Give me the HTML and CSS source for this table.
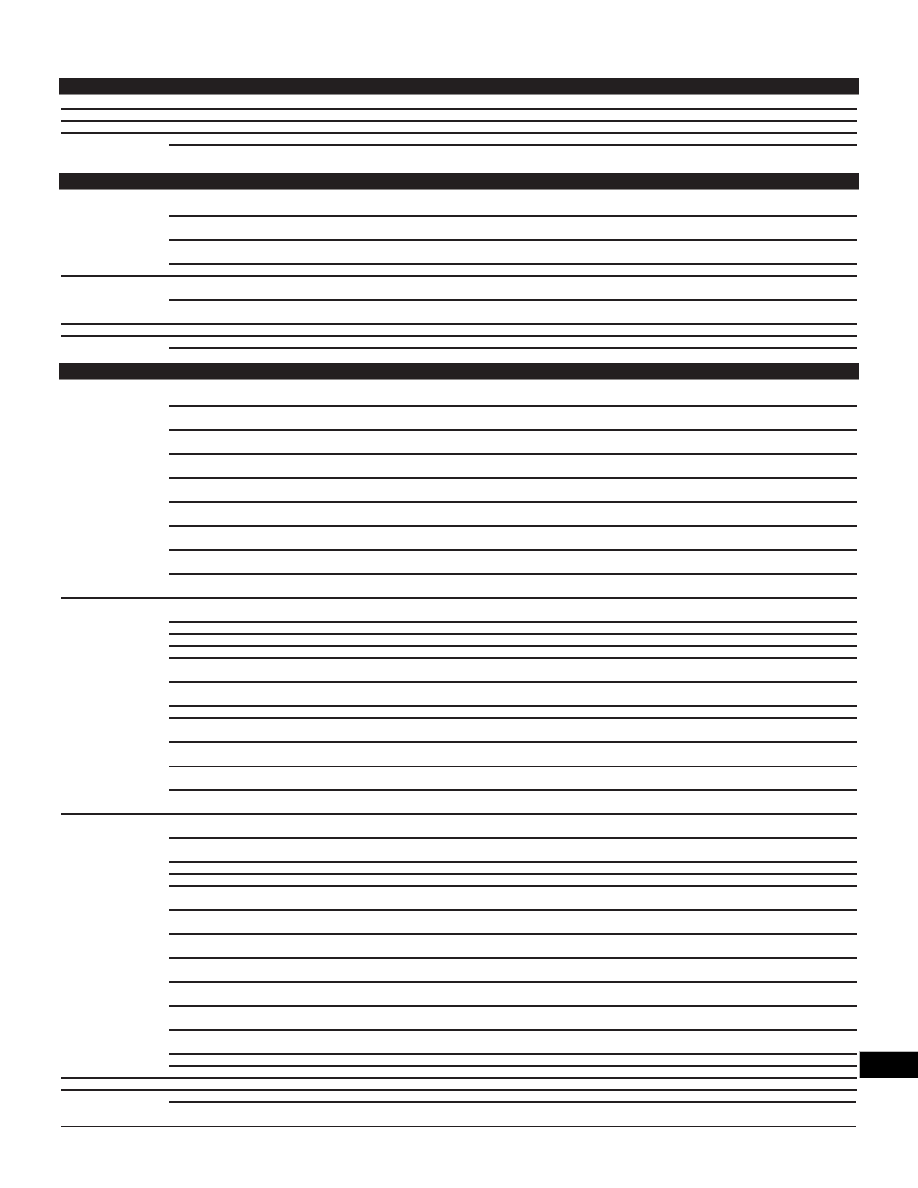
FILE: index.html
```html
<!DOCTYPE html>
<html>
<head>
<meta charset="utf-8">
<link rel="stylesheet" href="styles.css">
</head>
<body>
<div class="page">
  <section class="section first">
    <div class="bar"></div>
    <div class="rows">
      <div class="row h1"></div>
      <div class="row h1"></div>
      <div class="row h1"></div>
      <div class="group hidden">
        <div class="label"></div>
        <div class="subs">
          <div class="sub h1"></div>
          <div class="sub h2"></div>
        </div>
      </div>
    </div>
  </section>

  <section class="section">
    <div class="bar"></div>
    <div class="rows">
      <div class="group">
        <div class="label"></div>
        <div class="subs">
          <div class="sub h2"></div>
          <div class="sub h2"></div>
          <div class="sub h2"></div>
          <div class="sub h1"></div>
        </div>
      </div>
      <div class="group">
        <div class="label"></div>
        <div class="subs">
          <div class="sub h2"></div>
          <div class="sub h2"></div>
        </div>
      </div>
      <div class="row h1"></div>
      <div class="group hidden">
        <div class="label"></div>
        <div class="subs">
          <div class="sub h1"></div>
          <div class="sub h1"></div>
        </div>
      </div>
    </div>
  </section>

  <section class="section tight">
    <div class="bar"></div>
    <div class="rows">
      <div class="group">
        <div class="label"></div>
        <div class="subs">
          <div class="sub h2"></div>
          <div class="sub h2"></div>
          <div class="sub h2"></div>
          <div class="sub h2"></div>
          <div class="sub h2"></div>
          <div class="sub h2"></div>
          <div class="sub h2"></div>
          <div class="sub h2"></div>
          <div class="sub h2"></div>
        </div>
      </div>
      <div class="group">
        <div class="label"></div>
        <div class="subs">
          <div class="sub h2"></div>
          <div class="sub h1"></div>
          <div class="sub h1"></div>
          <div class="sub h1"></div>
          <div class="sub h2"></div>
          <div class="sub h2"></div>
          <div class="sub h1"></div>
          <div class="sub h2"></div>
          <div class="sub h2 thin"></div>
          <div class="sub h2"></div>
          <div class="sub h2"></div>
        </div>
      </div>
      <div class="group">
        <div class="label"></div>
        <div class="subs">
          <div class="sub h2"></div>
          <div class="sub h2"></div>
          <div class="sub h1"></div>
          <div class="sub h1"></div>
          <div class="sub h2"></div>
          <div class="sub h2"></div>
          <div class="sub h2"></div>
          <div class="sub h2"></div>
          <div class="sub h2"></div>
          <div class="sub h2"></div>
          <div class="sub h2"></div>
          <div class="sub h1"></div>
          <div class="sub h1"></div>
        </div>
      </div>
      <div class="row h1"></div>
      <div class="group thin-bottom">
        <div class="label"></div>
        <div class="subs">
          <div class="sub h1"></div>
          <div class="sub h2 tall"></div>
        </div>
      </div>
    </div>
  </section>
</div>
<div class="tab"></div>
</body>
</html>
```
FILE: styles.css
```css
html, body {
  margin: 0;
  padding: 0;
  background: #ffffff;
  font-family: "Liberation Sans", Arial, sans-serif;
}

.page {
  width: 800px;
  margin-left: 59px;
  padding-top: 78px;
  display: flex;
  flex-direction: column;
}

.section {
  display: flex;
  flex-direction: column;
  margin-top: 3px;
}

.section.first {
  margin-top: 0;
}

.section.tight {
  margin-top: 2px;
}

.bar {
  height: 16px;
  background: #231f20;
  border-bottom: 1px solid #8c8a8a;
}

.rows {
  margin: 3px 2px 0 2px;
  display: flex;
  flex-direction: column;
}

.row {
  border-bottom: 2px solid #231f20;
}

.h1 {
  height: 10px;
}

.h2 {
  height: 22px;
}

.group {
  display: flex;
  border-bottom: 2px solid #231f20;
}

.group.hidden {
  border-bottom-color: transparent;
}

.group.thin-bottom {
  border-bottom-width: 1px;
  margin-right: 1px;
}

.label {
  width: 108px;
  flex: none;
}

.subs {
  flex: 1;
  display: flex;
  flex-direction: column;
}

.sub {
  border-bottom: 2px solid #231f20;
}

.sub:last-child {
  border-bottom: none;
}

.sub.thin {
  border-bottom-width: 1px;
  height: 23px;
}

.sub.tall {
  height: 23px;
}

.tab {
  position: absolute;
  left: 859px;
  top: 1051px;
  width: 58px;
  height: 26px;
  background: #000000;
  border-left: 1px solid #b8b8b8;
  border-top: 1px solid #b8b8b8;
}
```
